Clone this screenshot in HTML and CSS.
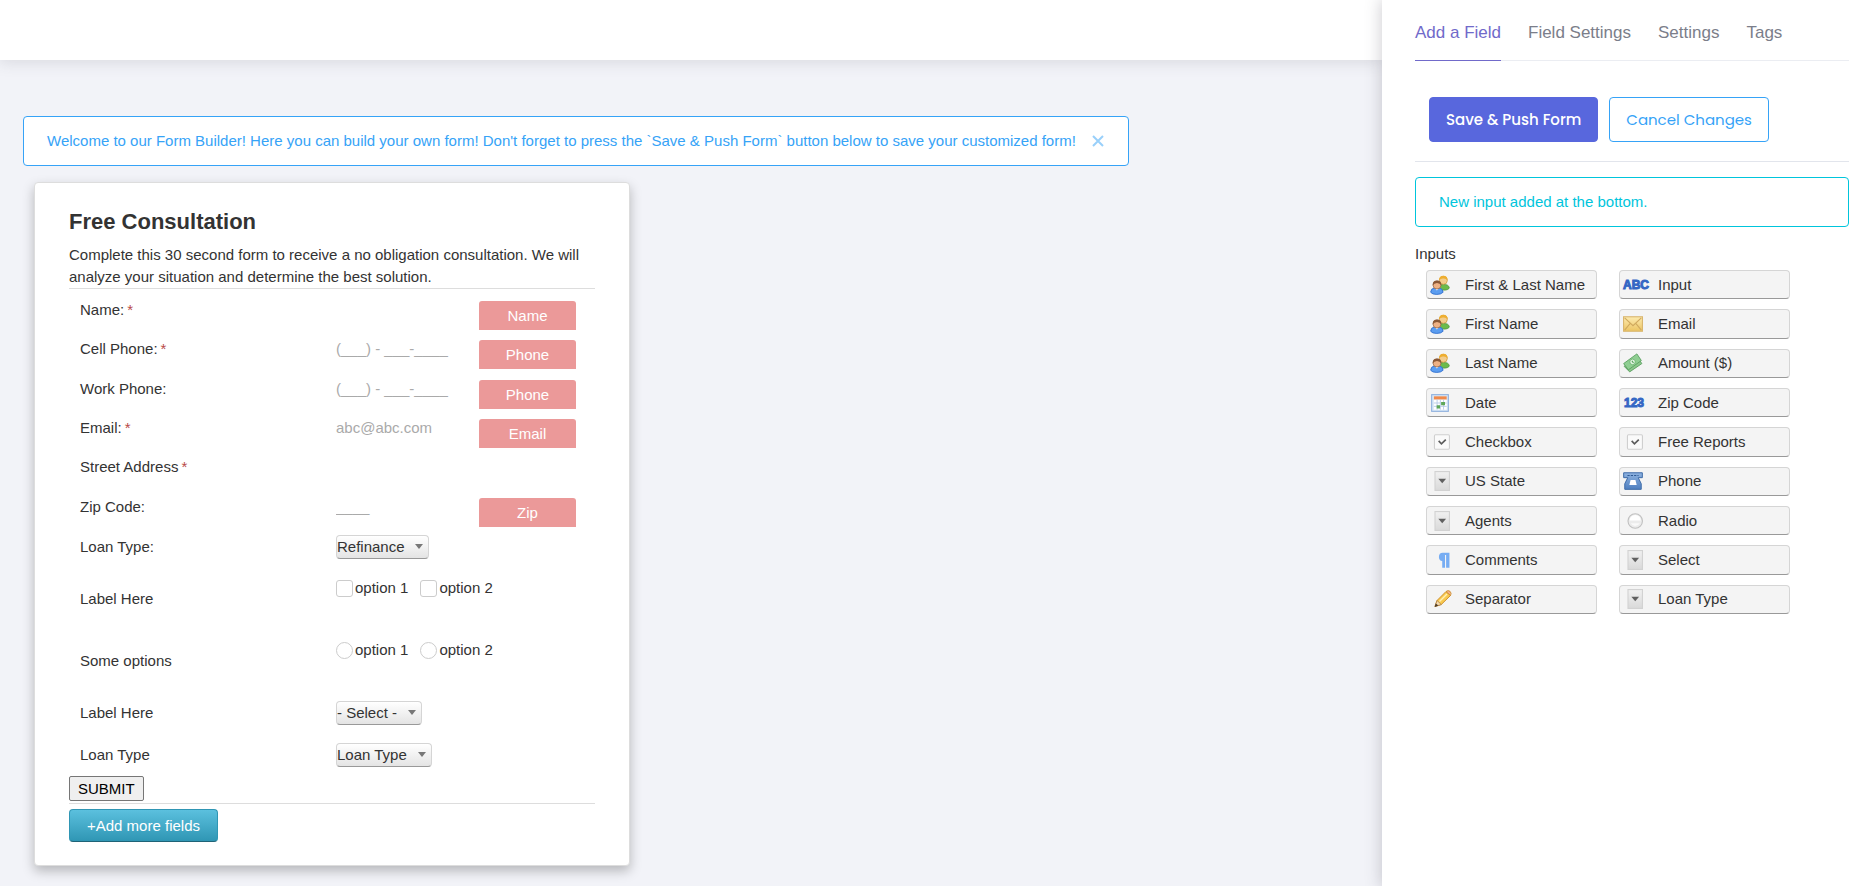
FILE: index.html
```html
<!DOCTYPE html>
<html lang="en">
<head>
  <meta charset="UTF-8" />
  <meta name="viewport" content="width=device-width, initial-scale=1.0" />
  <title>Form Builder</title>
  <link rel="stylesheet" href="styles.css">
</head>
<body>
  <!-- icon sprites -->
  <svg class="sprites" aria-hidden="true">
    <defs>
      <linearGradient id="gEnvelope" x1="0" y1="0" x2="0" y2="1">
        <stop offset="0" stop-color="#fdebb0" />
        <stop offset="1" stop-color="#ecc462" />
      </linearGradient>
      <linearGradient id="gPhone" x1="0" y1="0" x2="0" y2="1">
        <stop offset="0" stop-color="#8fb3e0" />
        <stop offset="1" stop-color="#4f7fc0" />
      </linearGradient>
      <linearGradient id="gGrey" x1="0" y1="0" x2="0" y2="1">
        <stop offset="0" stop-color="#f1f1f1" />
        <stop offset="1" stop-color="#d9d9d9" />
      </linearGradient>
    </defs>
    <symbol id="users" viewBox="0 0 18 18" preserveAspectRatio="xMinYMin">
      <path d="M7.500 13 V10.500 Q8.500 8.500 12 8.500 Q17 8.500 17.300 11.500 Q17 13.600 12 13.600Z" fill="#6cbb4a" stroke="#4f9a40" stroke-width=".8" />
      <circle cx="12" cy="4.800" r="3.600" fill="#f3cc8c" stroke="#cf9a3c" stroke-width=".7" />
      <path d="M8.200 4.800 Q8 .6 12 .6 Q16 .6 15.800 4.800 Q14.500 3 12 3.200 Q9.500 3 8.200 4.800Z" fill="#eeae30" />
      <path d="M.6 15.500 Q.8 12 4 11.700 H8 Q11.600 12 11.800 15.500 Q10 17.500 6 17.500 Q2 17.500 .6 15.500Z" fill="#5b9df0" stroke="#2f6fd0" stroke-width=".8" />
      <path d="M4.500 12 L6.200 14 L8 12Z" fill="#fff" />
      <circle cx="6.300" cy="9" r="3.600" fill="#eeb184" stroke="#9a6a48" stroke-width=".7" />
      <path d="M2.400 9.500 Q2.200 5 6.300 5 Q10.400 5 10.200 9.500 Q9 7.200 6.300 7.200 Q3.600 7.200 2.400 9.500Z" fill="#8a5836" />
    </symbol>
    <symbol id="envelope" viewBox="0 0 18 18" preserveAspectRatio="xMinYMin">
      <rect x=".5" y="2.500" width="17" height="13" fill="url(#gEnvelope)" stroke="#d9b66e" />
      <path d="M1.500 3.500 L9 10.500 L16.500 3.500 M1.500 14.500 L6.500 8.500 M16.500 14.500 L11.500 8.500" fill="none" stroke="#d0a95e" />
    </symbol>
    <symbol id="money" viewBox="0 0 18 18" preserveAspectRatio="xMinYMin">
      <path d="M1 12 L12.500 3.500 L17 9.500 L6 17Z" fill="#8cc78c" stroke="#5a9f60" stroke-width=".8" />
      <path d="M.6 9.500 L12.500 .8 L16.500 6.800 L4.800 15.200Z" fill="#8fce92" stroke="#5a9f60" stroke-width=".8" />
      <circle cx="8.600" cy="8" r="2.500" fill="#e3f4e3" stroke="#5fae63" stroke-width=".7" />
      <path d="M8 7 L9.400 9" stroke="#4f9a55" />
    </symbol>
    <symbol id="calendar" viewBox="0 0 18 18" preserveAspectRatio="xMinYMid">
      <rect x="1.500" y="1.500" width="15" height="15" fill="#dce9f8" stroke="#8fb0de" />
      <rect x="3.500" y="3" width="11.500" height="3" fill="#f08a4b" />
      <rect x="3.500" y="6" width="11.500" height="9" fill="#fff" />
      <path d="M3.500 9 H15 M3.500 12 H15 M6.400 6 V15 M9.300 6 V15 M12.200 6 V15" stroke="#b5c9e6" stroke-width=".8" />
      <path d="M10 8 h3.500 v3 h-3.500z M6 11 h3 v3 h-3z" fill="#5fa75a" />
    </symbol>
    <symbol id="check" viewBox="0 0 18 18" preserveAspectRatio="xMinYMid">
      <rect x="4" y="2.500" width="13.500" height="13" rx="1" fill="#fafafa" stroke="#cfcfcf" />
      <path d="M7.800 8 L10.300 10.600 L14.200 6.800" fill="none" stroke="#5c5c5c" stroke-width="1.500" />
    </symbol>
    <symbol id="dropdown" viewBox="0 0 18 18" preserveAspectRatio="xMinYMin">
      <rect x="4.500" y=".5" width="13" height="17" fill="url(#gGrey)" stroke="#d2d2d2" />
      <path d="M7.500 7 H14.500 L11 11Z" fill="#606060" />
    </symbol>
    <symbol id="phone" viewBox="0 0 18 18" preserveAspectRatio="xMinYMid">
      <path d="M.6 1.600 H17.400 V6 H13.700 L16.400 11.500 V16.500 H1.600 V11.500 L4.300 6 H.6Z" fill="url(#gPhone)" stroke="#3e6ba8" stroke-width=".9" />
      <path d="M4 4 H14" stroke="#2f5a94" stroke-dasharray="2 1" />
      <path d="M6.800 8 H11.200 L12.300 12.500 H5.700Z" fill="#fff" />
    </symbol>
    <symbol id="radio" viewBox="0 0 18 18" preserveAspectRatio="xMinYMid">
      <circle cx="11" cy="9" r="6.500" fill="#ececec" stroke="#c0c0c0" />
      <path d="M6 8.500 A5 5 0 0 1 16 8.500Z" fill="#fff" />
      <path d="M7 11 A4.500 4.500 0 0 0 15 11Z" fill="#fafafa" />
    </symbol>
    <symbol id="pilcrow" viewBox="0 0 18 18" preserveAspectRatio="xMinYMid">
      <path d="M17.500 2.500 V16 H14.500 V4.500 H13.500 V16 H11 V10 Q8 9.500 8 6.300 Q8 2.500 11.500 2.500Z" fill="#77adf3" />
    </symbol>
    <symbol id="pencil" viewBox="0 0 22 18" preserveAspectRatio="xMinYMid">
      <g transform="translate(4 0)">
        <path d="M1 16.500 L3 10.500 L12 1.500 L16.500 5.500 L7.300 14.500Z" fill="#f8c94f" stroke="#c98a25" stroke-width=".9" />
        <path d="M12 1.500 Q14 -.2 16 1.300 Q18 3.300 16.500 5.500Z" fill="#f3b08c" stroke="#c98a25" stroke-width=".8" />
        <path d="M5.500 11.500 L13 4" stroke="#fff0b5" stroke-width="1.500" />
        <path d="M1 16.500 L3 10.500 L7.300 14.500Z" fill="#f6dcae" stroke="#a8793a" stroke-width=".7" />
        <path d="M.6 17 L1.800 13.500 L4.300 15.600Z" fill="#4a3a2a" />
      </g>
    </symbol>
  </svg>

  <main>
    <header></header>

    <div class="alert alert-welcome">
      Welcome to our Form Builder! Here you can build your own form! Don't forget to press the `Save &amp; Push Form` button below to save your customized form!
      <button class="close" type="button" aria-label="Close">
        <svg width="12" height="12" viewBox="0 0 12 12"><path d="M1 1 L11 11 M11 1 L1 11" stroke="currentColor" stroke-width="2" /></svg>
      </button>
    </div>

    <form class="card">
      <h2>Free Consultation</h2>
      <p>Complete this 30 second form to receive a no obligation consultation. We will analyze your situation and determine the best solution.</p>
      <hr>
      <div class="fields">
        <div class="field">
          <label for="name">Name:<span class="required">*</span></label>
          <input type="text" id="name" />
          <span class="tag">Name</span>
        </div>
        <div class="field">
          <label for="cell">Cell Phone:<span class="required">*</span></label>
          <input type="text" id="cell" placeholder="(___) - ___-____" />
          <span class="tag">Phone</span>
        </div>
        <div class="field">
          <label for="work">Work Phone:</label>
          <input type="text" id="work" placeholder="(___) - ___-____" />
          <span class="tag">Phone</span>
        </div>
        <div class="field">
          <label for="email">Email:<span class="required">*</span></label>
          <input type="text" id="email" placeholder="abc@abc.com" />
          <span class="tag">Email</span>
        </div>
        <div class="field">
          <label for="street">Street Address<span class="required">*</span></label>
          <input type="text" id="street" />
        </div>
        <div class="field">
          <label for="zip">Zip Code:</label>
          <input type="text" id="zip" placeholder="____" />
          <span class="tag">Zip</span>
        </div>
      </div>
      <div class="field field-select">
        <label for="loan">Loan Type:</label>
        <div class="select"><select id="loan"><option>Refinance</option></select></div>
      </div>
      <div class="field field-options" role="group" aria-labelledby="checksLabel">
        <span id="checksLabel">Label Here</span>
        <div class="options">
          <label><input type="checkbox" />option 1</label>
          <label><input type="checkbox" />option 2</label>
        </div>
      </div>
      <div class="field field-options" role="group" aria-labelledby="radiosLabel">
        <span id="radiosLabel">Some options</span>
        <div class="options">
          <label><input type="radio" name="some" />option 1</label>
          <label><input type="radio" name="some" />option 2</label>
        </div>
      </div>
      <div class="field field-select">
        <label for="sel">Label Here</label>
        <div class="select"><select id="sel"><option>- Select -</option></select></div>
      </div>
      <div class="field field-select last">
        <label for="loan2">Loan Type</label>
        <div class="select"><select id="loan2"><option>Loan Type</option></select></div>
      </div>
      <button class="submit" type="button">SUBMIT</button>
      <hr>
      <button class="add-more" type="button">+Add more fields</button>
    </form>
  </main>

  <aside>
    <nav>
      <a class="active" href="#add">Add a Field</a>
      <a href="#field-settings">Field Settings</a>
      <a href="#settings">Settings</a>
      <a href="#tags">Tags</a>
    </nav>
    <div class="actions">
      <button class="save" type="button">Save &amp; Push Form</button>
      <button class="cancel" type="button">Cancel Changes</button>
    </div>
    <div class="alert alert-new">New input added at the bottom.</div>
    <h3>Inputs</h3>
    <div class="inputs">
      <button type="button"><svg><use href="#users" /></svg>First &amp; Last Name</button>
      <button type="button"><svg class="glyphs" viewBox="0 0 22 18"><text x="0" y="13">ABC</text></svg>Input</button>
      <button type="button"><svg><use href="#users" /></svg>First Name</button>
      <button type="button"><svg><use href="#envelope" /></svg>Email</button>
      <button type="button"><svg><use href="#users" /></svg>Last Name</button>
      <button type="button"><svg><use href="#money" /></svg>Amount ($)</button>
      <button type="button"><svg><use href="#calendar" /></svg>Date</button>
      <button type="button"><svg class="glyphs" viewBox="0 0 22 18"><text x="1" y="13">123</text></svg>Zip Code</button>
      <button type="button"><svg><use href="#check" /></svg>Checkbox</button>
      <button type="button"><svg><use href="#check" /></svg>Free Reports</button>
      <button type="button"><svg><use href="#dropdown" /></svg>US State</button>
      <button type="button"><svg><use href="#phone" /></svg>Phone</button>
      <button type="button"><svg><use href="#dropdown" /></svg>Agents</button>
      <button type="button"><svg><use href="#radio" /></svg>Radio</button>
      <button type="button"><svg><use href="#pilcrow" /></svg>Comments</button>
      <button type="button"><svg><use href="#dropdown" /></svg>Select</button>
      <button type="button"><svg><use href="#pencil" /></svg>Separator</button>
      <button type="button"><svg><use href="#dropdown" /></svg>Loan Type</button>
    </div>
  </aside>
</body>
</html>
```
FILE: styles.css
```css
:root {
  --blue: #36a3f7;
  --cyan: #00c5dc;
  --purple: #716aca;
  --indigo: #5867dd;
  --text: #333;
  --line: #ddd;
}

* {
  box-sizing: border-box;
}

body {
  margin: 0;
  display: flex;
  min-height: 100vh;
  font-family: 'Liberation Sans', Arial, sans-serif;
  font-size: 15px;
  line-height: 22px;
  color: var(--text);
  background: #f2f3f8;
}

button, input, select {
  font: inherit;
  color: inherit;
}

button {
  cursor: pointer;
}

.sprites {
  position: absolute;
  width: 0;
  height: 0;
}

main {
  flex: 1;
  padding-bottom: 20px;
}

header {
  height: 60px;
  background: #fff;
  box-shadow: 0 1px 15px 1px rgba(69, 65, 78, 0.15);
}

.alert {
  position: relative;
  padding: 13px 23px;
  background: #fff;
  border: 1px solid;
  border-radius: 4px;
}

.alert-welcome {
  width: 80%;
  margin: 56px 0 16px 23px;
  color: var(--blue);
}

.close {
  position: absolute;
  top: 18px;
  right: 24px;
  padding: 0;
  border: none;
  background: none;
  color: inherit;
  line-height: 0;
  opacity: 0.5;
}

/* form preview */
.card {
  width: calc(43% + 2px);
  margin-left: 34px;
  padding: 28px 34px 23px;
  background: #fff;
  border: 1px solid var(--line);
  border-radius: 4px;
  box-shadow: 0 5px 12px rgba(0, 0, 0, 0.25);
}

.card h2 {
  margin: 0 0 11px;
  font-size: 22px;
  line-height: 22px;
}

.card p {
  margin: 0;
}

hr {
  margin: 0;
  border: none;
  border-top: 1px solid var(--line);
}

.fields {
  display: grid;
  grid-template-rows: repeat(6, 1fr);
  height: 236px;
  margin-top: 10px;
}

.field {
  display: grid;
  grid-template-columns: 256px 143px 97px;
  align-items: start;
  padding-left: 11px;
}

.required {
  margin-left: 3px;
  font-size: 15px;
  color: #b94a48;
}

.field input[type="text"] {
  width: 100%;
  height: 22px;
  padding: 0;
  border: none;
  outline: none;
  background: none;
}

.field input::placeholder {
  color: #aaa;
}

.tag {
  height: 29px;
  margin-top: 2px;
  padding-top: 4px;
  border-radius: 3px 3px 0 0;
  background: #eb9999;
  color: #fff;
  text-align: center;
}

.field-select {
  align-items: center;
  margin-bottom: 18px;
}

.field-select.last {
  margin-bottom: 9px;
}

.select {
  position: relative;
  justify-self: start;
}

.select select {
  display: block;
  height: 24px;
  padding: 0 23px 0 0;
  appearance: none;
  border: 1px solid #d5d5d5;
  border-bottom-color: #999;
  border-radius: 4px;
  background: linear-gradient(#fff, #e4e4e4);
}

.select::after {
  content: "";
  position: absolute;
  top: 9px;
  right: 6px;
  border: 4px solid transparent;
  border-top: 5px solid #777;
  border-bottom: none;
  pointer-events: none;
}

.field-options {
  height: 62px;
}

.field-options > span {
  padding-top: 11px;
}

.options {
  display: flex;
  gap: 12px;
}

.options label {
  display: flex;
  gap: 2px;
  white-space: nowrap;
}

.options input {
  appearance: none;
  width: 17px;
  height: 17px;
  margin: 3px 0 0;
  border: 1px solid #ccc;
  border-radius: 3px;
  background: #fff;
}

.options input[type="radio"] {
  border-radius: 50%;
}

.submit {
  display: block;
  height: 25px;
  margin-bottom: 2px;
  padding: 0 8px;
  border: 1px solid #767676;
  border-radius: 2px;
  background: #efefef;
  color: #000;
}

.add-more {
  display: block;
  height: 33px;
  margin-top: 5px;
  padding: 0 17px;
  border: 1px solid #2f96b4;
  border-bottom-color: #1f6377;
  border-radius: 4px;
  background: linear-gradient(#5bc0de, #2f96b4);
  color: #fff;
}

/* sidebar */
aside {
  width: 476px;
  padding: 0 9px 0 33px;
  background: #fff;
  box-shadow: 0 0 15px 1px rgba(69, 65, 78, 0.25);
  z-index: 1;
}

nav {
  display: flex;
  gap: 27px;
  height: 61px;
  border-bottom: 1px solid #ebedf2;
  font-size: 17px;
}

nav a {
  height: 61px;
  padding-top: 22px;
  color: #7b7e8a;
  text-decoration: none;
}

nav a.active {
  color: var(--purple);
  border-bottom: 1px solid var(--purple);
}

.actions {
  display: flex;
  gap: 11px;
  padding: 36px 14px 19px;
  margin-bottom: 15px;
  border-bottom: 1px solid #e2e5ec;
}

.actions button {
  height: 45px;
  padding: 0 16px;
  border: 1px solid var(--indigo);
  border-radius: 4px;
  font-family: Poppins, Inter, sans-serif;
  font-size: 15px;
}

.save {
  background: var(--indigo);
  color: #fff;
  font-weight: 500;
}

.actions .cancel {
  border-color: var(--blue);
  background: #fff;
  color: var(--blue);
}

.alert-new {
  color: var(--cyan);
}

h3 {
  margin: 16px 0 5px;
  font-size: 15px;
  font-weight: normal;
}

.inputs {
  display: grid;
  grid-template-columns: repeat(2, 171px);
  grid-template-rows: repeat(9, 1fr);
  gap: 10px 22px;
  height: 344px;
  margin-left: 11px;
}

.inputs button {
  display: flex;
  align-items: center;
  gap: 13px;
  padding: 0 3px;
  border: 1px solid #d5d5d5;
  border-bottom-color: #999;
  border-radius: 4px;
  background: #f4f4f4;
  white-space: nowrap;
}

.inputs svg {
  width: 22px;
  height: 20px;
}

.inputs .glyphs {
  overflow: visible;
  font-family: 'Liberation Sans', sans-serif;
  font-size: 12px;
  font-weight: bold;
  fill: #3467c4;
  stroke: #3467c4;
}
```
